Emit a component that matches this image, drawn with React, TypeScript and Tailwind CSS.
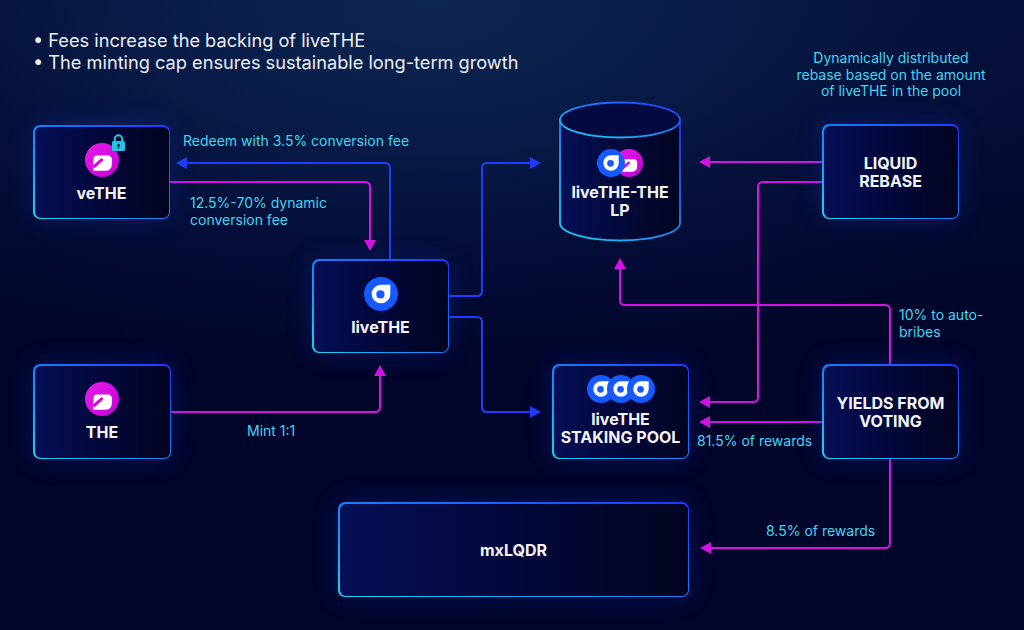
import type { ReactNode } from "react";

const BLUE = "#1f3cff";
const PINK = "#d512e2";

/** Magenta THE token with the white leaf mark. */
function TheLogo({ size = 34 }: { size?: number }) {
  return (
    <svg width={size} height={size} viewBox="0 0 24 24" className="block">
      <defs>
        <linearGradient id="theg" x1="0" y1="0" x2="1" y2="1">
          <stop offset="0" stopColor="#e81ee8" />
          <stop offset="1" stopColor="#c400d6" />
        </linearGradient>
      </defs>
      <circle cx="12" cy="12" r="12" fill="url(#theg)" />
      <path
        d="M6 11.4 Q6 8.8 8.6 8.8 H17.2 L19 10.6 V14.6 Q19 19.6 14 19.6 H5.8 V15.4 Z"
        fill="#fff"
      />
      <path d="M5.2 16.2 L11.6 10.6 L13.2 12 L6.8 17.8 Z" fill="#d60ad8" />
    </svg>
  );
}

/** Blue liveTHE token: a white drop with a hole. */
function LiveLogo({ size = 34 }: { size?: number }) {
  return (
    <svg width={size} height={size} viewBox="0 0 24 24" className="block">
      <circle cx="12" cy="12" r="12" fill="#1559ff" />
      <path
        fillRule="evenodd"
        d="M12 5.4 H18.6 V12 A6.6 6.6 0 1 1 12 5.4 Z M11.6 9.4 A2.9 2.9 0 1 0 11.6 15.2 A2.9 2.9 0 1 0 11.6 9.4 Z"
        fill="#fff"
      />
    </svg>
  );
}

function Lock() {
  return (
    <svg width="15" height="17" viewBox="0 0 15 17" className="block">
      <path d="M3.8 7 V5 a3.7 3.7 0 0 1 7.4 0 V7" fill="none" stroke="#22c5e6" strokeWidth="2" />
      <rect x="1" y="7" width="13" height="10" rx="1.5" fill="#22c5e6" />
      <circle cx="7.5" cy="11.2" r="1.4" fill="#062a4a" />
      <rect x="6.8" y="11.5" width="1.4" height="3" fill="#062a4a" />
    </svg>
  );
}

/** Box with the cyan→blue gradient rim used by every node. */
function Node({
  x,
  y,
  w,
  h,
  children,
}: {
  x: number;
  y: number;
  w: number;
  h: number;
  children: ReactNode;
}) {
  return (
    <div
      className="absolute rounded-[7px] bg-linear-to-tr from-[#1ed4f2] via-[#1d7cf8] to-[#2233ff] p-[1.5px] shadow-[0_0_26px_rgba(20,70,255,0.22)]"
      style={{ left: x, top: y, width: w, height: h }}
    >
      <div className="flex h-full w-full flex-col items-center justify-center gap-[7px] rounded-[6px] bg-linear-to-r from-[#050f55] via-[#03073a] to-[#020420] text-center text-[16px] font-bold leading-[18px] text-[#f3f4f8]">
        {children}
      </div>
    </div>
  );
}

function Label({ x, y, children, className = "" }: { x: number; y: number; children: ReactNode; className?: string }) {
  return (
    <div
      className={"absolute text-[14px] leading-[16.5px] text-[#43d5f1] " + className}
      style={{ left: x, top: y }}
    >
      {children}
    </div>
  );
}

function Head({ x, y, dir, color }: { x: number; y: number; dir: "l" | "r" | "u" | "d"; color: string }) {
  const pts = {
    l: `${x},${y} ${x + 11},${y - 6} ${x + 11},${y + 6}`,
    r: `${x},${y} ${x - 11},${y - 6} ${x - 11},${y + 6}`,
    u: `${x},${y} ${x - 6},${y + 11} ${x + 6},${y + 11}`,
    d: `${x},${y} ${x - 6},${y - 11} ${x + 6},${y - 11}`,
  }[dir];
  return <polygon points={pts} fill={color} />;
}

function Wires() {
  const blue = [
    "M390 259 V168 Q390 163 385 163 H186",
    "M449 296 H477 Q482 296 482 291 V168 Q482 163 487 163 H531",
    "M449 317 H477 Q482 317 482 322 V407 Q482 412 487 412 H531",
  ];
  const pink = [
    "M167 182 H365 Q370 182 370 187 V241",
    "M170 412 H375 Q380 412 380 407 V375",
    "M822 162 H709",
    "M822 182 H763 Q758 182 758 187 V397 Q758 402 753 402 H709",
    "M890 364 V310 Q890 305 885 305 H625 Q620 305 620 300 V268",
    "M822 422 H709",
    "M890 459 V543 Q890 548 885 548 H710",
  ];
  return (
    <svg className="absolute inset-0" width="1024" height="630" viewBox="0 0 1024 630">
      {blue.map((d) => (
        <path key={d} d={d} fill="none" stroke={BLUE} strokeWidth="2" />
      ))}
      {pink.map((d) => (
        <path key={d} d={d} fill="none" stroke={PINK} strokeWidth="2" />
      ))}
      <Head x={176} y={163} dir="l" color={BLUE} />
      <Head x={541} y={163} dir="r" color={BLUE} />
      <Head x={541} y={412} dir="r" color={BLUE} />
      <Head x={370} y={251} dir="d" color={PINK} />
      <Head x={380} y={365} dir="u" color={PINK} />
      <Head x={699} y={162} dir="l" color={PINK} />
      <Head x={699} y={402} dir="l" color={PINK} />
      <Head x={620} y={258} dir="u" color={PINK} />
      <Head x={699} y={422} dir="l" color={PINK} />
      <Head x={700} y={548} dir="l" color={PINK} />
    </svg>
  );
}

function Cylinder() {
  return (
    <div className="absolute" style={{ left: 558, top: 101, width: 124, height: 142 }}>
      <svg width="124" height="142" viewBox="0 0 124 142" className="absolute inset-0">
        <defs>
          <linearGradient id="cylStroke" x1="0" y1="1" x2="1" y2="0">
            <stop offset="0" stopColor="#1ed4f2" />
            <stop offset="1" stopColor="#2233ff" />
          </linearGradient>
          <linearGradient id="cylFill" x1="0" y1="0" x2="1" y2="0">
            <stop offset="0" stopColor="#050f55" />
            <stop offset="1" stopColor="#020420" />
          </linearGradient>
        </defs>
        <path
          d="M2 19 V122 A60 17.5 0 0 0 122 122 V19"
          fill="url(#cylFill)"
          stroke="url(#cylStroke)"
          strokeWidth="1.8"
        />
        <ellipse cx="62" cy="19" rx="60" ry="17.5" fill="#040a40" stroke="url(#cylStroke)" strokeWidth="1.8" />
      </svg>
      <div className="absolute inset-x-0 top-[48px] flex flex-col items-center gap-[6px] text-center text-[16px] font-bold leading-[18px] text-[#f3f4f8]">
        <div className="flex">
          <div className="relative z-10 rounded-full">
            <LiveLogo size={28} />
          </div>
          <div className="-ml-[10px]">
            <TheLogo size={28} />
          </div>
        </div>
        <div>
          liveTHE-THE
          <br />
          LP
        </div>
      </div>
    </div>
  );
}

export default function App() {
  return (
    <div className="relative h-[630px] w-[1024px] overflow-hidden bg-[#02052a] font-['Inter',sans-serif]">
      {/* backdrop: lighter water near the surface, dark at the bottom */}
      <div className="absolute inset-0 bg-[radial-gradient(ellipse_75%_60%_at_42%_0%,#0e2a56_0%,#081b48_35%,#040c36_65%,#02052a_100%)]" />
      <div className="absolute inset-0 bg-[linear-gradient(180deg,rgba(10,30,70,0.35)_0%,rgba(2,5,42,0)_55%)]" />

      {/* bullets */}
      <ul className="relative pl-[33px] pt-[29px] text-[18.2px] leading-[22px] text-[#eceef4]">
        <li>• Fees increase the backing of liveTHE</li>
        <li>• The minting cap ensures sustainable long-term growth</li>
      </ul>

      <Wires />

      <Node x={33} y={125} w={137} h={94}>
        <div className="relative">
          <TheLogo />
          <div className="absolute -right-[7px] -top-[9px]">
            <Lock />
          </div>
        </div>
        <div>veTHE</div>
      </Node>

      <Node x={33} y={364} w={138} h={95}>
        <TheLogo />
        <div>THE</div>
      </Node>

      <Node x={312} y={259} w={137} h={94}>
        <LiveLogo />
        <div>liveTHE</div>
      </Node>

      <Cylinder />

      <Node x={822} y={124} w={137} h={95}>
        <div>
          LIQUID
          <br />
          REBASE
        </div>
      </Node>

      <Node x={552} y={364} w={137} h={95}>
        <div className="-mt-[2px] flex">
          <LiveLogo size={28} />
          <div className="-ml-[8px]">
            <LiveLogo size={28} />
          </div>
          <div className="-ml-[8px]">
            <LiveLogo size={28} />
          </div>
        </div>
        <div>
          liveTHE
          <br />
          STAKING POOL
        </div>
      </Node>

      <Node x={822} y={364} w={137} h={95}>
        <div>
          YIELDS FROM
          <br />
          VOTING
        </div>
      </Node>

      <Node x={338} y={502} w={351} h={95}>
        <div>mxLQDR</div>
      </Node>

      <Label x={183} y={133}>Redeem with 3.5% conversion fee</Label>
      <Label x={190} y={195}>
        12.5%-70% dynamic
        <br />
        conversion fee
      </Label>
      <Label x={247} y={423}>Mint 1:1</Label>
      <Label x={791} y={50} className="w-[200px] text-center">
        Dynamically distributed
        <br />
        rebase based on the amount
        <br />
        of liveTHE in the pool
      </Label>
      <Label x={899} y={307}>
        10% to auto-
        <br />
        bribes
      </Label>
      <Label x={697} y={433}>81.5% of rewards</Label>
      <Label x={766} y={523}>8.5% of rewards</Label>
    </div>
  );
}
